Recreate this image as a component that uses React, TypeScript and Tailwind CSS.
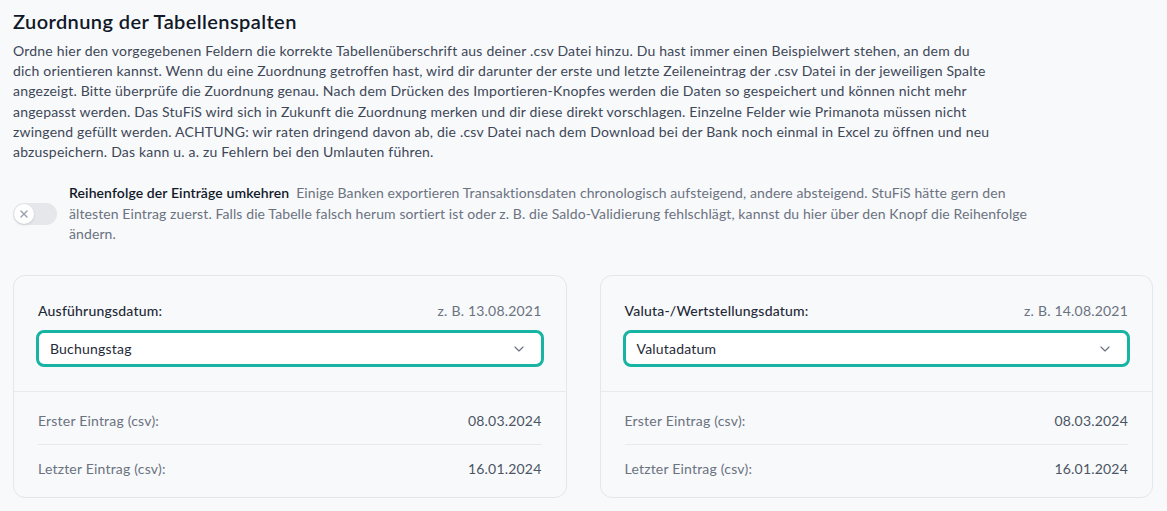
import { ChevronDown, X } from 'lucide-react';

const introLines = [
  'Ordne hier den vorgegebenen Feldern die korrekte Tabellenüberschrift aus deiner .csv Datei hinzu. Du hast immer einen Beispielwert stehen, an dem du',
  'dich orientieren kannst. Wenn du eine Zuordnung getroffen hast, wird dir darunter der erste und letzte Zeileneintrag der .csv Datei in der jeweiligen Spalte',
  'angezeigt. Bitte überprüfe die Zuordnung genau. Nach dem Drücken des Importieren-Knopfes werden die Daten so gespeichert und können nicht mehr',
  'angepasst werden. Das StuFiS wird sich in Zukunft die Zuordnung merken und dir diese direkt vorschlagen. Einzelne Felder wie Primanota müssen nicht',
  'zwingend gefüllt werden. ACHTUNG: wir raten dringend davon ab, die .csv Datei nach dem Download bei der Bank noch einmal in Excel zu öffnen und neu',
  'abzuspeichern. Das kann u. a. zu Fehlern bei den Umlauten führen.',
];

interface Mapping {
  label: string;
  example: string;
  value: string;
  first: string;
  last: string;
}

const mappings: Mapping[] = [
  {
    label: 'Ausführungsdatum:',
    example: 'z. B. 13.08.2021',
    value: 'Buchungstag',
    first: '08.03.2024',
    last: '16.01.2024',
  },
  {
    label: 'Valuta-/Wertstellungsdatum:',
    example: 'z. B. 14.08.2021',
    value: 'Valutadatum',
    first: '08.03.2024',
    last: '16.01.2024',
  },
];

function MappingCard({ m }: { m: Mapping }) {
  return (
    <div className="bg-[#f8f9fb] border border-[#e3e6ea] rounded-xl">
      <div className="px-6 pt-[25px] pb-[24px] border-b border-[#e8eaee]">
        <div className="flex items-center justify-between h-5">
          <span className="text-sm font-medium text-[#1f2937]">{m.label}</span>
          <span className="text-sm text-[#6b7280]">{m.example}</span>
        </div>
        <div className="mt-[9px] -mx-[2px] h-[37px] bg-white border-[3px] border-[#17b3a3] rounded-lg flex items-center justify-between pl-[11px] pr-[14px]">
          <span className="text-sm text-[#1f2937]">{m.value}</span>
          <ChevronDown className="w-4 h-4 text-[#6b7280]" strokeWidth={1.75} />
        </div>
      </div>
      <div className="px-6 pt-[5px] pb-1">
        <div className="flex items-center justify-between h-12 border-b border-[#e8eaee] text-sm">
          <span className="text-[#6b7280]">Erster Eintrag (csv):</span>
          <span className="text-[#4b5563]">{m.first}</span>
        </div>
        <div className="flex items-center justify-between h-12 text-sm">
          <span className="text-[#6b7280]">Letzter Eintrag (csv):</span>
          <span className="text-[#4b5563]">{m.last}</span>
        </div>
      </div>
    </div>
  );
}

export default function App() {
  return (
    <div
      className="min-h-[511px] bg-[#f8f9fb] pl-[13px] pr-[14px] pt-[7px] tracking-[0.2px]"
      style={{ fontFamily: 'Lato, "Noto Sans", sans-serif' }}
    >
      <h1 className="text-[20px] leading-7 font-semibold text-[#111827] tracking-[0.4px]">
        Zuordnung der Tabellenspalten
      </h1>
      <p className="mt-[6px] text-sm leading-[20.2px] text-[#3d4757]">
        {introLines.map((line) => (
          <span key={line} className="block whitespace-nowrap">
            {line}
          </span>
        ))}
      </p>

      <div className="mt-[21px] flex items-center gap-3">
        <button
          type="button"
          className="flex-none w-11 h-[22px] rounded-full bg-[#e5e7eb] p-[1px] flex items-center"
        >
          <span className="w-5 h-5 rounded-full bg-white shadow flex items-center justify-center">
            <X className="w-3 h-3 text-[#9ca3af]" strokeWidth={3} />
          </span>
        </button>
        <p className="text-sm leading-[20.3px] text-[#6b7280] tracking-[0.1px]">
          <span className="block whitespace-nowrap">
            <span className="font-semibold text-[#111827]">Reihenfolge der Einträge umkehren</span>
            <span className="ml-[7px]">
              Einige Banken exportieren Transaktionsdaten chronologisch aufsteigend, andere absteigend. StuFiS hätte gern den
            </span>
          </span>
          <span className="block whitespace-nowrap">
            ältesten Eintrag zuerst. Falls die Tabelle falsch herum sortiert ist oder z. B. die Saldo-Validierung fehlschlägt, kannst du hier über den Knopf die Reihenfolge
          </span>
          <span className="block whitespace-nowrap">ändern.</span>
        </p>
      </div>

      <div className="mt-[31px] grid grid-cols-2 gap-[33px]">
        {mappings.map((m) => (
          <MappingCard key={m.label} m={m} />
        ))}
      </div>
    </div>
  );
}
